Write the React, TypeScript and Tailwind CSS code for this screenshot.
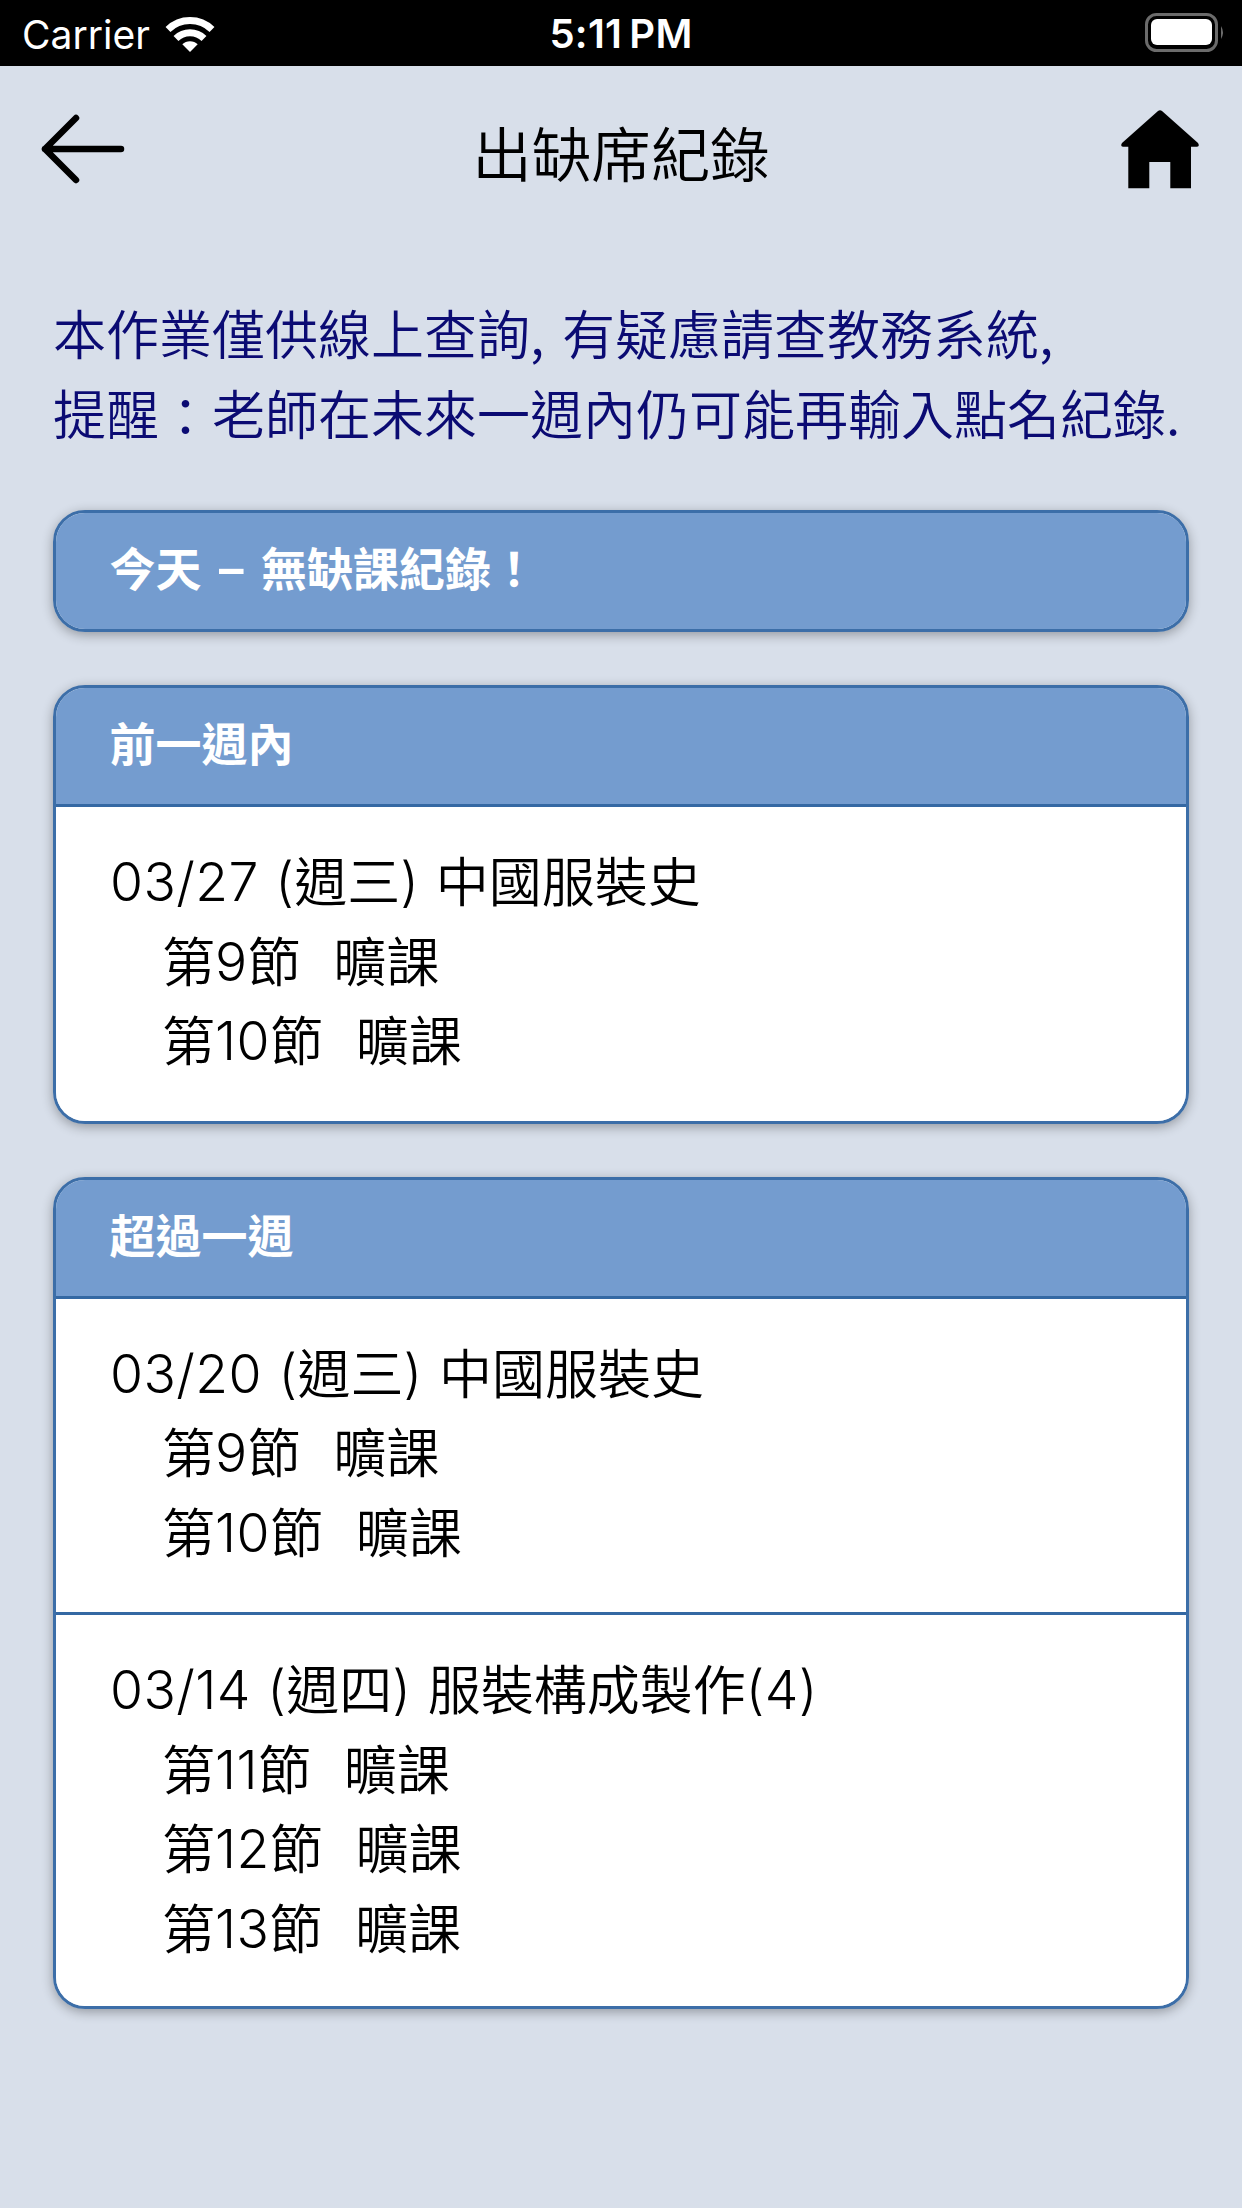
import React from "react";

type Period = { no: string; status: string };
type RecordItem = { date: string; day: string; course: string; suffix?: string; periods: Period[] };

const previousWeek: RecordItem[] = [
  {
    date: "03/27",
    day: "週三",
    course: "中國服裝史",
    periods: [
      { no: "9", status: "曠課" },
      { no: "10", status: "曠課" },
    ],
  },
];

const olderRecords: RecordItem[] = [
  {
    date: "03/20",
    day: "週三",
    course: "中國服裝史",
    periods: [
      { no: "9", status: "曠課" },
      { no: "10", status: "曠課" },
    ],
  },
  {
    date: "03/14",
    day: "週四",
    course: "服裝構成製作",
    suffix: "(4)",
    periods: [
      { no: "11", status: "曠課" },
      { no: "12", status: "曠課" },
      { no: "13", status: "曠課" },
    ],
  },
];

function StatusBar() {
  return (
    <div className="grid h-[66px] grid-cols-3 items-center bg-black font-['Inter',sans-serif] text-[40px] leading-none text-white">
      <div className="flex items-center gap-[15px] pl-[22px]">
        <span className="pt-[3px] text-[39px] font-normal">Carrier</span>
        <svg className="mt-[1px]" width="50" height="38" viewBox="0 0 50 38" fill="none" stroke="#fff" strokeWidth="7">
          <path d="M3 14.5 A31.5 31.5 0 0 1 47 14.5" />
          <path d="M11 23.5 A20 20 0 0 1 39 23.5" />
          <path d="M25 37 L17.3 29.3 A11 11 0 0 1 32.7 29.3 Z" fill="#fff" stroke="none" />
        </svg>
      </div>
      <div className="pt-[2px] text-center font-semibold tracking-[0.3px]">
        5:11<span className="ml-[7px]">PM</span>
      </div>
      <div className="flex justify-end pr-[17px]">
        <svg width="80" height="40" viewBox="0 0 80 40">
          <rect x="1.5" y="1.5" width="70" height="36" rx="10" fill="none" stroke="#6b6b6b" strokeWidth="3" />
          <rect x="6" y="6" width="61" height="26" rx="6" fill="#fff" />
          <path d="M76 13 Q80 19.5 76 26 Z" fill="#6b6b6b" />
        </svg>
      </div>
    </div>
  );
}

function NavBar() {
  return (
    <header className="flex h-[176px] items-start justify-between pl-[41px] pr-[43px] text-black">
      <svg className="mt-[48px]" width="84" height="70" viewBox="0 0 84 70" fill="none" stroke="#000" strokeWidth="6.5" strokeLinecap="round" strokeLinejoin="round">
        <path d="M35 4 L4 35 L35 66 M4 35 H80" />
      </svg>
      <h1 className="mr-[4px] mt-[41px] text-[59.5px] leading-[88px]">出缺席紀錄</h1>
      <svg className="mt-[44px]" width="78" height="79" viewBox="0 0 78 79" fill="#000">
        <path d="M37 1 Q39 -0.5 41 1 L77 33 Q79 36.7 76 36.7 H70 V78.3 H49.3 V52 H28.3 V78.3 H7.3 V36.7 H2 Q-1 36.7 1 33 Z" />
      </svg>
    </header>
  );
}

function CardHeader({ title }: { title: string }) {
  return (
    <h2 className="h-[116px] bg-[#749ccf] pl-[53.5px] pt-[20px] text-[46px] font-bold leading-[66px] text-white">
      {title.split("–").map((part, i) => (
        <React.Fragment key={part}>
          {i > 0 && <span className="mx-[7px] font-['Inter',sans-serif] text-[49px] font-semibold leading-none">–</span>}
          {part}
        </React.Fragment>
      ))}
    </h2>
  );
}

function RecordSection({ item }: { item: RecordItem }) {
  const bottom = item.periods.length > 2 ? "pb-[40px]" : "pb-[42px]";
  return (
    <section className={`border-t-[3px] border-[#3468a3] bg-white pl-[54px] pt-[33px] text-[53px] text-black ${bottom}`}>
      <p className="h-[79.5px] whitespace-pre leading-[79.5px]">
        <Latin>{item.date + " ("}</Latin>
        {item.day}
        <Latin>{") "}</Latin>
        {item.course}
        {item.suffix && <Latin>{item.suffix}</Latin>}
      </p>
      {item.periods.map((p) => (
        <p key={p.no} className="h-[79.5px] pl-[52px] leading-[79.5px]">
          第<Latin>{p.no}</Latin>節<span className="ml-[33px]">{p.status}</span>
        </p>
      ))}
    </section>
  );
}

function Latin({ children }: { children: string }) {
  return (
    <span className="align-[1px] font-['Inter',sans-serif] text-[53.5px] font-light leading-none tracking-[0.4px] [word-spacing:1px]">
      {children}
    </span>
  );
}

function Card({ title, items = [] }: { title: string; items?: RecordItem[] }) {
  return (
    <article className="overflow-hidden rounded-[32px] border-[3px] border-[#3c6ea8] shadow-[0_3px_12px_rgba(0,0,0,0.32)]">
      <CardHeader title={title} />
      {items.map((item) => (
        <RecordSection key={item.date} item={item} />
      ))}
    </article>
  );
}

export default function App() {
  return (
    <div lang="zh-Hant" className="min-h-[2208px] w-[1242px] bg-[#d8dfea] font-['Noto_Sans_CJK_TC',sans-serif] font-[350]">
      <StatusBar />
      <NavBar />
      <main className="px-[53px]">
        <p className="whitespace-nowrap pt-[51px] text-[53px] leading-[79.5px] text-[#0b0b73]">
          本作業僅供線上查詢,<span className="ml-[6px]"> 有疑慮請查教務系統,</span>
          <br />
          提醒<span className="relative top-[2px]">：</span>老師在未來一週內仍可能再輸入點名紀錄.
        </p>
        <div className="mt-[58px] flex flex-col gap-[53px]">
          <Card title="今天 – 無缺課紀錄！" />
          <Card title="前一週內" items={previousWeek} />
          <Card title="超過一週" items={olderRecords} />
        </div>
      </main>
    </div>
  );
}
